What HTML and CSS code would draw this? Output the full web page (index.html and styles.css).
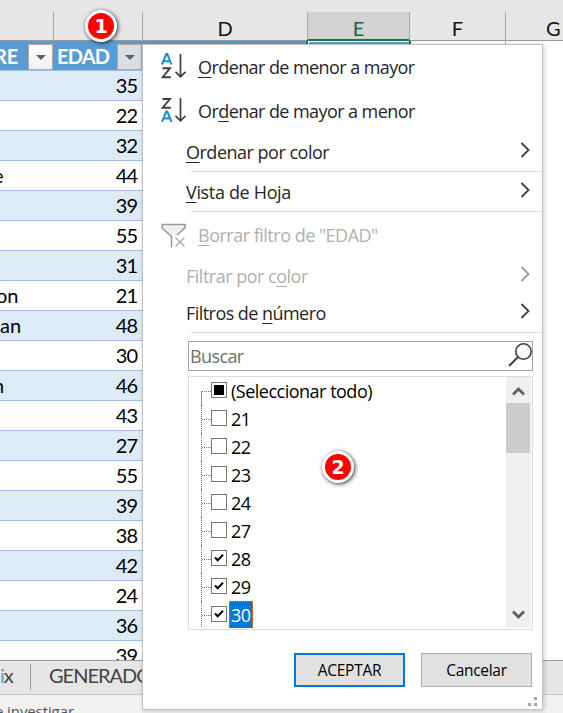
FILE: index.html
```html
<!DOCTYPE html>
<html lang="es">
<head>
<meta charset="utf-8">
<title>Filtro EDAD</title>
<link rel="stylesheet" href="styles.css">
</head>
<body>
<main class="app">
  <div class="columns">
    <div class="col"></div><div class="col"></div><div class="col">D</div><div class="col active">E</div><div class="col">F</div><div class="col last">G</div>
  </div>
  <div class="grid">
    <div class="thead">
      <div class="th name"><span>RE</span><i class="drop"><b></b></i></div>
      <div class="th age"><span>EDAD</span><i class="drop open"><b></b></i></div>
      <div class="th wide"></div>
      <div class="th cell"></div>
    </div>
    <div class="rows">
      <div class="row"><span></span><span>35</span></div>
      <div class="row"><span></span><span>22</span></div>
      <div class="row"><span></span><span>32</span></div>
      <div class="row"><span class="cut-e">e</span><span>44</span></div>
      <div class="row"><span></span><span>39</span></div>
      <div class="row"><span class="cut-a">a</span><span>55</span></div>
      <div class="row"><span></span><span>31</span></div>
      <div class="row"><span class="cut-on">on</span><span>21</span></div>
      <div class="row"><span>an</span><span>48</span></div>
      <div class="row"><span></span><span>30</span></div>
      <div class="row"><span class="cut-n">n</span><span>46</span></div>
      <div class="row"><span></span><span>43</span></div>
      <div class="row"><span></span><span>27</span></div>
      <div class="row"><span></span><span>55</span></div>
      <div class="row"><span></span><span>39</span></div>
      <div class="row"><span></span><span>38</span></div>
      <div class="row"><span></span><span>42</span></div>
      <div class="row"><span></span><span>24</span></div>
      <div class="row"><span></span><span>36</span></div>
      <div class="row"><span></span><span>39</span></div>
    </div>
  </div>
  <div class="tabs"><span class="tab first"><em>i</em>x</span><span class="tab">GENERADO</span></div>
  <div class="status">e investigar</div>

  <section class="menu">
    <div class="item sort-asc">
      <svg class="icon" width="28" height="28" viewBox="0 0 28 28" fill="none"><path d="M2 11.500 6.300 1h1L11.500 11.500M3.600 8.200h6.400" stroke="#1e8bcd" stroke-width="2"/><path d="M2.500 15.200H10L2.700 24.200H10.800" stroke="#404040" stroke-width="1.900"/><path d="M20.500 1V23.500M15.500 18.800l5 5 5-5" stroke="#404040" stroke-width="1.700"/></svg>
      <span class="label l1"><u>O</u>rdenar de menor a mayor</span>
    </div>
    <div class="item sort-desc">
      <svg class="icon" width="28" height="28" viewBox="0 0 28 28" fill="none"><path d="M2.500 2H10L2.700 10.700H10.800" stroke="#404040" stroke-width="1.900"/><path d="M2 24.800 6.300 14.500h1L11.500 24.800M3.600 21.600h6.400" stroke="#1e8bcd" stroke-width="2"/><path d="M20.500 1V23.500M15.500 18.800l5 5 5-5" stroke="#404040" stroke-width="1.700"/></svg>
      <span class="label l2">Or<u>d</u>enar de mayor a menor</span>
    </div>
    <div class="item plain"><span class="label l3"><u>O</u>rdenar por color</span><svg class="chev" width="10" height="16" viewBox="0 0 10 16"><path d="M1.500 1 8.500 8 1.500 15"/></svg></div>
    <div class="rule"></div>
    <div class="item plain second"><span class="label l4"><u>V</u>ista de Hoja</span><svg class="chev" width="10" height="16" viewBox="0 0 10 16"><path d="M1.500 1 8.500 8 1.500 15"/></svg></div>
    <div class="rule"></div>
    <div class="item clear off">
      <svg class="icon" width="28" height="28" viewBox="0 0 28 28"><path d="M2 3.500h23v3l-8 8-5-1v13h-1v-11L2 6.500z" fill="#f0f0f0"/><path d="M11.500 26.500V15.500L2 6.800V3.500H25V6.800L17 14" fill="none" stroke="#999" stroke-width="1.500"/><path d="M15.500 16.500l9 9m0-9-9 9" stroke="#b0b0b0" stroke-width="1.500"/></svg>
      <span class="label l5"><u>B</u>orrar filtro de "EDAD"</span>
    </div>
    <div class="item plain third off"><span class="label l6">Filtrar por c<u>o</u>lor</span><svg class="chev" width="10" height="16" viewBox="0 0 10 16"><path d="M1.500 1 8.500 8 1.500 15"/></svg></div>
    <div class="item plain fourth"><span class="label l7">Filtros de <u>n</u>úmero</span><svg class="chev" width="10" height="16" viewBox="0 0 10 16"><path d="M1.500 1 8.500 8 1.500 15"/></svg></div>
    <div class="rule"></div>
    <div class="search"><span>Buscar</span><svg width="25" height="28" viewBox="0 0 25 28" fill="none" stroke="#404040" stroke-width="1.600"><circle cx="16.500" cy="9.500" r="7.700" fill="#fafafa"/><path d="M11 15 2 24" stroke-width="2"/></svg></div>
    <div class="list">
      <div class="tree">
        <div class="node root"><i class="box part"></i><span class="all">(Seleccionar todo)</span></div>
        <div class="node"><i class="box"></i><span>21</span></div>
        <div class="node"><i class="box"></i><span>22</span></div>
        <div class="node"><i class="box"></i><span>23</span></div>
        <div class="node"><i class="box"></i><span>24</span></div>
        <div class="node"><i class="box"></i><span>27</span></div>
        <div class="node"><i class="box"><svg width="10" height="10" viewBox="0 0 10 10"><path d="M1 4.500 3.700 7.300 9 1.800"/></svg></i><span>28</span></div>
        <div class="node"><i class="box"><svg width="10" height="10" viewBox="0 0 10 10"><path d="M1 4.500 3.700 7.300 9 1.800"/></svg></i><span>29</span></div>
        <div class="node"><i class="box"><svg width="10" height="10" viewBox="0 0 10 10"><path d="M1 4.500 3.700 7.300 9 1.800"/></svg></i><span class="sel">30</span></div>
      </div>
      <div class="scroll">
        <svg width="25" height="26" viewBox="0 0 25 26"><path d="M7 17.500l5.500-5.500 5.500 5.500"/></svg>
        <div class="thumb"></div>
        <svg class="down" width="25" height="26" viewBox="0 0 25 26"><path d="M7 9.500l5.500 5.500 5.500-5.500"/></svg>
      </div>
    </div>
    <div class="buttons"><button class="btn ok">ACEPTAR</button><button class="btn cancel">Cancelar</button></div>
    <svg class="grip" width="9" height="9" viewBox="0 0 9 9" fill="#a6a6a6"><path d="M6 0h3v3H6zM0 6h3v3H0zM6 6h3v3H6z"/></svg>
  </section>
  <div class="badge one">1</div>
  <div class="badge two">2</div>
</main>
</body>
</html>
```
FILE: styles.css
```css
* { box-sizing: border-box; }
body { margin: 0; }
.app { position: relative; width: 563px; height: 713px; overflow: hidden; background: #fff; font-family: "Open Sans", "Noto Sans", sans-serif; color: #262626; }

.columns { display: grid; grid-template-columns: 54px 89px 165px 102px 96px 1fr; height: 41px; padding-top: 12px; background: #e6e6e6; border-bottom: 1px solid #999; font: 20px/32px Lato, sans-serif; color: #111; text-align: center; }
.col { border-right: 1px solid #a6a6a6; }
.col.active { height: 29px; margin-left: -1px; background: #d2d2d2; color: #1f6040; border-left: 1px solid #a6a6a6; border-bottom: 2px solid #217346; }
.col.last { padding-left: 40px; border: 0; text-align: left; }

.grid { height: 619px; overflow: hidden; font: 20px/29px Lato, sans-serif; color: #000; }
.thead { display: flex; height: 30px; }
.th { display: flex; background: #5b9bd5; border-bottom: 1px solid #9bc2e6; color: #fff; font-weight: 700; overflow: hidden; }
.th.name { width: 53px; justify-content: space-between; }
.th.name span { margin-left: -6px; }
.th.age { width: 89px; padding-left: 4px; justify-content: space-between; letter-spacing: -.8px; }
.th.wide { width: 164px; }
.th.cell { width: 105px; border: 2px solid #217346; border-top: 0; box-shadow: inset 1px 1px #fff; }
.th span { padding-top: 1px; }
.drop { display: flex; align-items: center; justify-content: center; width: 25px; height: 26px; margin-top: 3px; border: 1px solid #a8a8a8; background: linear-gradient(#fff, #eceff3); }
.drop.open { background: #d9dde4; }
.drop b { border: 5px solid transparent; border-top-color: #606060; border-bottom: 0; }
.row { display: grid; grid-template-columns: 53px 85px; height: 30px; width: 142px; border-bottom: 1px solid #9bc2e6; overflow: hidden; }
.row:nth-child(odd) { background: #ddebf7; }
.row span:last-child { text-align: right; letter-spacing: -1px; padding-right: 1px; }
.cut-e { margin-left: -7px; }
.cut-a { margin-left: -9px; color: #b0ffff; }
.cut-on { margin-left: -4px; }
.cut-n { margin-left: -7px; }

.tabs { display: flex; height: 35px; border-top: 1px solid #999; border-bottom: 1px solid #c6c6c6; background: #e6e6e6; font: 20px/29px Lato, sans-serif; color: #444; }
.tab { width: 111px; padding-left: 18px; letter-spacing: -1px; overflow: hidden; }
.tab.first { width: 31px; height: 26px; margin-top: 3px; padding: 0; line-height: 23px; border-right: 1px solid #999; }
.tab em { color: #5b9bd5; font-style: normal; }
.status { height: 18px; padding-top: 5px; margin-left: 0; text-indent: -5px; background: #f3f2f1; font-size: 15px; line-height: 22px; letter-spacing: -.1px; color: #555; white-space: nowrap; overflow: hidden; }

.menu { position: absolute; left: 142px; top: 44px; width: 401px; height: 666px; background: #fff; border: 1px solid #c0c0c0; box-shadow: 1px 1px 5px rgba(0,0,0,.2); font-size: 18px; }
.item { display: flex; align-items: center; white-space: nowrap; }
.sort-asc { height: 45px; padding: 0 0 2px 17px; }
.sort-desc { height: 43px; padding: 0 0 2px 17px; }
.clear { height: 46px; padding-left: 17px; }
.icon { flex: none; margin-right: 10px; }
.plain { height: 38px; padding: 0 12px 0 43px; justify-content: space-between; }
.second { height: 39px; }
.third, .fourth { height: 37px; padding-bottom: 2px; }
.off { color: #b0b0b0; }
.label u { text-decoration-thickness: 1px; text-underline-offset: 3px; text-decoration-skip-ink: none; }
.chev { fill: none; stroke: #404040; stroke-width: 1.8; margin-top: -4px; }
.off .chev { stroke: #999; }
.rule { height: 1px; margin-left: 48px; background: #d9d9d9; }
.label { letter-spacing: -.5px; }
.l1, .l2 { letter-spacing: -.58px; }
.l4 { letter-spacing: -.34px; }
.l7 { letter-spacing: -.55px; }
.search { display: flex; justify-content: space-between; width: 345px; height: 30px; margin: 8px 0 0 45px; padding-left: 1px; border: 1px solid #a6a6a6; color: #6f6f6f; line-height: 28px; letter-spacing: -.9px; }
.search span { letter-spacing: -.95px; letter-spacing: -.6px; }
.list { display: flex; justify-content: space-between; width: 345px; height: 254px; margin: 5px 0 0 45px; padding-right: 1px; border: 1px solid #dcdcdc; }
.tree { height: 251px; padding-left: 12px; overflow: hidden; color: #000; }
.node { display: flex; align-items: center; height: 28px; border-left: 1px dotted #777; }
.node.root { border-image: linear-gradient(transparent 50%, #888 50%) 1; }
.node::before { content: ""; width: 9px; border-top: 1px dotted #777; }
.box { display: flex; align-items: center; justify-content: center; width: 16px; height: 16px; margin-top: -2px; border: 1px solid #777; background: #fff; }
.box svg { fill: none; stroke: #000; stroke-width: 2; }
.part::after { content: ""; width: 10px; height: 10px; background: #000; }
.node span { height: 28px; margin-left: 2px; padding: 0 2px; line-height: 29px; letter-spacing: -.5px; }
.node .sel { color: #fff; background: #0078d7; outline: 1px dotted #d98032; outline-offset: -1px; }
.scroll { display: flex; flex-direction: column; width: 25px; height: 251px; background: #f0f0f0; }
.scroll svg { fill: none; stroke: #606060; stroke-width: 2.8; flex: none; }
.thumb { width: 24px; height: 50px; background: #cdcdcd; }
.down { margin-top: auto; }
.buttons { display: flex; gap: 16px; margin: 23px 0 0 151px; }
.btn { width: 111px; height: 34px; padding: 0; border: 1px solid #adadad; background: #e1e1e1; font: 15.5px "Open Sans", sans-serif; color: #000; letter-spacing: -.3px; }
.ok { border: 2px solid #0078d7; }
.grip { position: absolute; right: 5px; bottom: 3px; }

.badge { position: absolute; width: 32px; height: 32px; border: 3px solid #fff; border-radius: 50%; background: #f00; box-shadow: 1px 1px 4px rgba(0,0,0,.8); color: #fff; font: bold 19px/26px "DejaVu Sans", sans-serif; text-align: center; }
.one { left: 85px; top: 10px; }
.two { left: 322px; top: 451px; }
```
